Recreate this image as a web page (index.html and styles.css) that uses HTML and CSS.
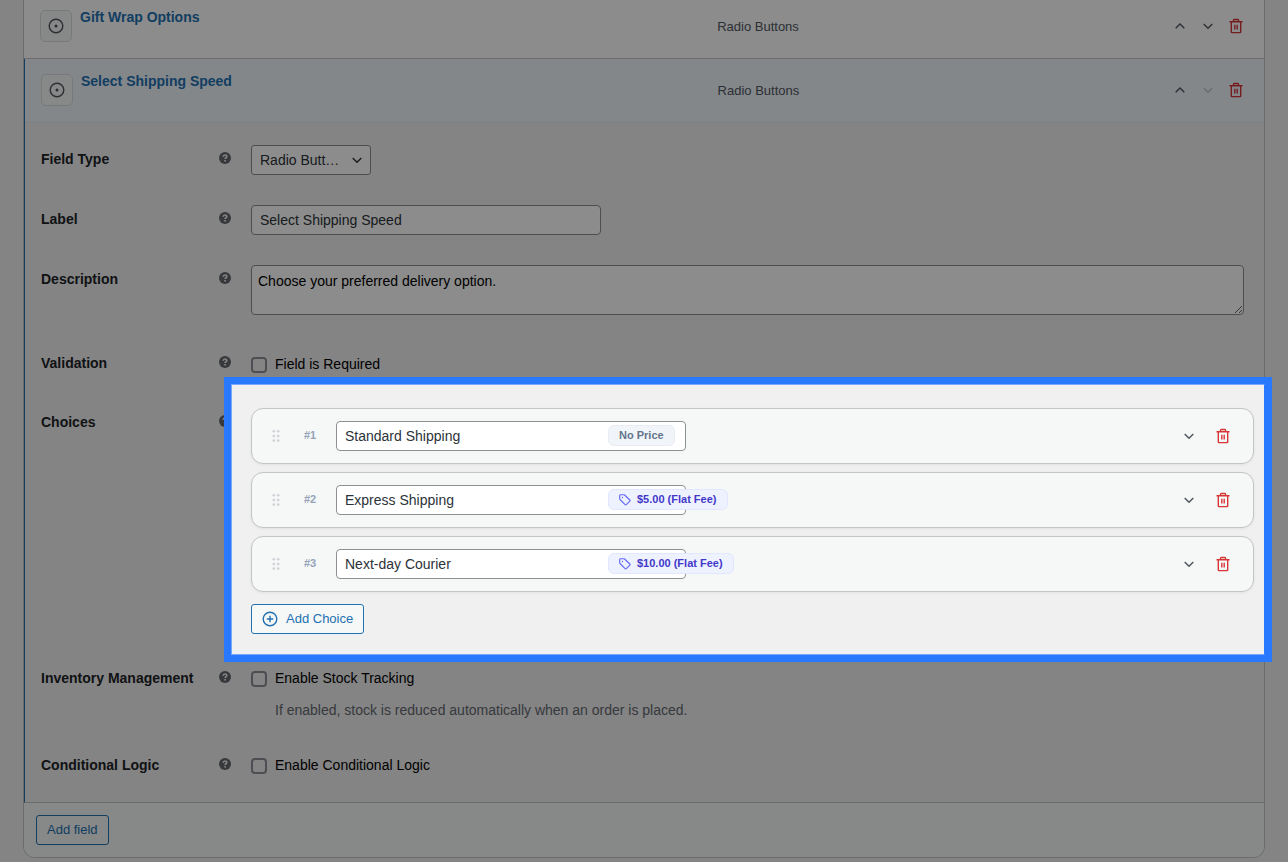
FILE: index.html
```html
<!DOCTYPE html>
<html lang="en">
<head>
    <meta charset="utf-8">
    <title>Edit fields</title>
    <link rel="stylesheet" href="styles.css">
</head>
<body>
    <svg class="sprite">
        <symbol id="radio" viewBox="0 0 16 16"><circle cx="8" cy="8" r="6.8" /><circle cx="8" cy="8" r=".8" fill="currentColor" /></symbol>
        <symbol id="up" viewBox="0 0 16 16"><path d="M3.7 10.2 8 6l4.3 4.2" /></symbol>
        <symbol id="down" viewBox="0 0 16 16"><path d="M3.7 6 8 10.2 12.3 6" /></symbol>
        <symbol id="trash" viewBox="0 0 16 16"><path d="M1.5 3.8h13M3.3 3.8v10.1q0 .7.7.7h8q.7 0 .7-.7V3.8M5.5 3.8V2.2q0-.7.7-.7h3.6q.7 0 .7.7v1.6M6.8 6.8v4.8M9.200 6.8v4.8" /></symbol>
        <symbol id="help" viewBox="0 0 12 12"><circle cx="6" cy="6" r="6" fill="currentColor" stroke="none" /><path class="mark" d="M4.2 4.7q.1-1.700 1.800-1.700t1.800 1.500c0 1.200-1.700 1.200-1.700 2.400M6.100 8v1.600" /></symbol>
        <symbol id="drag" viewBox="0 0 8 14"><g fill="currentColor" stroke="none"><circle cx="1.8" cy="2.2" r="1.3" /><circle cx="6.2" cy="2.2" r="1.3" /><circle cx="1.8" cy="7" r="1.3" /><circle cx="6.2" cy="7" r="1.3" /><circle cx="1.8" cy="11.6" r="1.3" /><circle cx="6.2" cy="11.6" r="1.3" /></g></symbol>
        <symbol id="tag" viewBox="0 0 12 12"><path d="M.7 1.6v3.2q0 .4.3.7l5.1 5.200q.6.6 1.200 0l3.500-3.500q.6-.6 0-1.200L5.600 1Q5.300.7 4.900.7H1.600Q.7.7.7 1.600z" /><circle cx="3.500" cy="3.500" r=".7" fill="currentColor" stroke="none" /></symbol>
        <symbol id="plus" viewBox="0 0 16 16"><circle cx="8" cy="8" r="6.8" /><path d="M8 4.8v6.4M4.8 8h6.4" /></symbol>
    </svg>

    <div class="fields">
        <div class="field-header first">
            <span class="type-icon"><svg><use href="#radio" /></svg></span>
            <a class="title">Gift Wrap Options</a>
            <span class="type">Radio Buttons</span>
            <div class="actions">
                <svg><use href="#up" /></svg>
                <svg><use href="#down" /></svg>
                <svg class="delete"><use href="#trash" /></svg>
            </div>
        </div>

        <div class="field-open">
            <div class="field-header">
                <span class="type-icon"><svg><use href="#radio" /></svg></span>
                <a class="title">Select Shipping Speed</a>
                <span class="type">Radio Buttons</span>
                <div class="actions">
                    <svg><use href="#up" /></svg>
                    <svg class="disabled"><use href="#down" /></svg>
                    <svg class="delete"><use href="#trash" /></svg>
                </div>
            </div>

            <div class="settings">
                <div class="setting">
                    <label>Field Type</label>
                    <svg class="help"><use href="#help" /></svg>
                    <div class="input select"><span>Radio Butt…</span><svg><use href="#down" /></svg></div>
                </div>
                <div class="setting">
                    <label>Label</label>
                    <svg class="help"><use href="#help" /></svg>
                    <input class="input" value="Select Shipping Speed">
                </div>
                <div class="setting description">
                    <label>Description</label>
                    <svg class="help"><use href="#help" /></svg>
                    <textarea>Choose your preferred delivery option.</textarea>
                </div>
                <div class="setting validation">
                    <label>Validation</label>
                    <svg class="help"><use href="#help" /></svg>
                    <div class="check"><span class="box"></span>Field is Required</div>
                </div>
                <div class="setting">
                    <label>Choices</label>
                    <svg class="help"><use href="#help" /></svg>
                    <div class="choices">
                        <div class="choice">
                            <svg class="drag"><use href="#drag" /></svg>
                            <span class="number">#1</span>
                            <input class="input" value="Standard Shipping">
                            <span class="badge">No Price</span>
                            <svg class="toggle"><use href="#down" /></svg>
                            <svg class="delete"><use href="#trash" /></svg>
                        </div>
                        <div class="choice">
                            <svg class="drag"><use href="#drag" /></svg>
                            <span class="number">#2</span>
                            <input class="input" value="Express Shipping">
                            <span class="badge price"><svg><use href="#tag" /></svg>$5.00 (Flat Fee)</span>
                            <svg class="toggle"><use href="#down" /></svg>
                            <svg class="delete"><use href="#trash" /></svg>
                        </div>
                        <div class="choice">
                            <svg class="drag"><use href="#drag" /></svg>
                            <span class="number">#3</span>
                            <input class="input" value="Next-day Courier">
                            <span class="badge price"><svg><use href="#tag" /></svg>$10.00 (Flat Fee)</span>
                            <svg class="toggle"><use href="#down" /></svg>
                            <svg class="delete"><use href="#trash" /></svg>
                        </div>
                        <button class="button add-choice"><svg><use href="#plus" /></svg>Add Choice</button>
                    </div>
                </div>
                <div class="setting inventory">
                    <label>Inventory Management</label>
                    <svg class="help"><use href="#help" /></svg>
                    <div>
                        <div class="check"><span class="box"></span>Enable Stock Tracking</div>
                        <p class="note">If enabled, stock is reduced automatically when an order is placed.</p>
                    </div>
                </div>
                <div class="setting logic">
                    <label>Conditional Logic</label>
                    <svg class="help"><use href="#help" /></svg>
                    <div class="check"><span class="box"></span>Enable Conditional Logic</div>
                </div>
            </div>
        </div>

        <div class="footer">
            <button class="button">Add field</button>
        </div>
    </div>

    <div class="spotlight"></div>
</body>
</html>
```

FILE: styles.css
```css
* {
    box-sizing: border-box;
}

body {
    margin: 0;
    height: 862px;
    overflow: hidden;
    position: relative;
    background: #f0f0f1;
    color: #000;
    font: 14px "Liberation Sans", Arial, sans-serif;
}

svg {
    width: 16px;
    height: 16px;
    flex: none;
    fill: none;
    stroke: currentColor;
    stroke-width: 1.4;
}

.sprite {
    display: none;
}

.fields {
    margin: 0 23px;
    height: 858px;
    border: 1px solid #c3c4c7;
    border-top: 0;
    border-radius: 0 0 12px 12px;
    background: #fff;
    overflow: hidden;
}

/* collapsed and open field rows */
.field-header {
    display: grid;
    grid-template-columns: 32px 628.6px 1fr auto;
    column-gap: 8px;
    height: 64px;
    padding: 15px 20px 0 16px;
    border-bottom: 1px solid #e2e8ee;
    background: #f0f6fc;
}

.field-header.first {
    grid-template-columns: 32px 629.2px 1fr auto;
    height: 59px;
    padding-top: 10px;
    border-bottom-color: #c3c4c7;
    background: #fff;
}

.type-icon {
    display: flex;
    align-items: center;
    justify-content: center;
    width: 32px;
    height: 32px;
    border: 1px solid #dcdcde;
    border-radius: 5px;
    background: #f6f8f7;
    color: #50575e;
}

.title {
    height: 16px;
    line-height: 15px;
    color: #2271b1;
    font-weight: 700;
}

.type {
    line-height: 33px;
    font-size: 13px;
    color: #50575e;
}

.actions {
    display: flex;
    align-items: center;
    gap: 12px;
    height: 32px;
    color: #50575e;
}

.delete {
    color: #d63638;
}

.disabled {
    opacity: .3;
}

.field-open {
    height: 744px;
    border-left: 1px solid #2271b1;
    border-bottom: 1px solid #c3c4c7;
}

.settings {
    height: 679px;
    padding: 22px 20px 0 16px;
    background: #f0f0f0;
}

.setting {
    display: grid;
    grid-template-columns: 178px 32px 1fr;
    align-items: start;
    padding-bottom: 30px;
}

.setting label {
    line-height: 28px;
    font-weight: 700;
    color: #1d2327;
}

.help {
    width: 12px;
    height: 12px;
    margin-top: 7px;
    color: #646970;
}

.mark {
    stroke: #f0f0f0;
    stroke-width: 1.7;
}

.description {
    height: 84px;
}

.validation {
    height: 59px;
}

.inventory {
    height: 87px;
}

.logic {
    height: 51px;
}

.input {
    width: 350px;
    height: 30px;
    padding: 0 8px;
    border: 1px solid #8c8f94;
    border-radius: 4px;
    background: #fff;
    color: #2c3338;
    font: inherit;
}

.select {
    display: flex;
    align-items: center;
    justify-content: space-between;
    width: 120px;
    padding-right: 5px;
    border-radius: 3px;
}

textarea {
    display: block;
    width: 100%;
    height: 50px;
    padding: 5px 6px;
    border: 1px solid #8c8f94;
    border-radius: 4px;
    background: #fff;
    color: #000;
    font: 14px/20px "Liberation Sans", Arial, sans-serif;
}

.check {
    display: flex;
    align-items: center;
    gap: 8px;
    height: 30px;
}

.inventory .check,
.logic .check {
    height: 28px;
}

.box {
    width: 16px;
    height: 16px;
    margin-top: 2px;
    border: 2px solid #8c8f94;
    border-radius: 4px;
}

.note {
    margin: 2px 0 0 24px;
    line-height: 32px;
    color: #646970;
}

/* choice list */
.choices {
    width: 1003px;
}

.choice {
    position: relative;
    display: flex;
    align-items: center;
    height: 56px;
    margin-bottom: 8px;
    padding: 0 22px 0 20px;
    border: 1px solid #c3c4c7;
    border-radius: 12px;
    background: #f6f8f7;
    box-shadow: 0 1px 3px rgba(0, 0, 0, .06);
}

.drag {
    width: 8px;
    height: 14px;
    color: #d0d1d6;
}

.number {
    width: 32px;
    margin: -2px 0 0 24px;
    font-size: 11px;
    font-weight: 700;
    color: #94a3b8;
}

.badge {
    position: absolute;
    top: 16px;
    left: 356px;
    display: flex;
    align-items: center;
    gap: 6px;
    height: 21px;
    padding: 0 10px 2px;
    border: 1px solid #e8edf4;
    border-radius: 6px;
    background: #f1f5f9;
    color: #64748b;
    font-size: 11px;
    font-weight: 700;
}

.badge.price {
    padding-right: 10.5px;
    border-color: #e0e7ff;
    background: #eef2ff;
    color: #4338ca;
}

.badge svg {
    width: 12px;
    height: 12px;
    margin-top: 2px;
    color: #6366f1;
    stroke-width: 1.1;
}

.toggle {
    margin: 0 18px 0 auto;
    color: #50575e;
    stroke-width: 1.5;
}

.button {
    height: 30px;
    padding: 0 10px 2px;
    border: 1px solid #2271b1;
    border-radius: 3px;
    background: #f6f7f7;
    color: #2271b1;
    font: 13px "Liberation Sans", Arial, sans-serif;
}

.add-choice {
    display: flex;
    align-items: center;
    gap: 8px;
    margin-top: 12px;
}

.add-choice svg {
    margin-top: 2px;
}

.footer {
    height: 55px;
    padding: 12px;
    background: #f6f8f7;
}

/* dims the page around the choice list */
.spotlight {
    position: absolute;
    left: 231px;
    top: 384px;
    width: 1034px;
    height: 271px;
    border: 1px solid #77a8fb;
    border-right-color: #2979ff;
    box-shadow: 0 0 0 7px #2979ff, 0 0 0 1300px rgba(0, 0, 0, .45);
    pointer-events: none;
}
```
